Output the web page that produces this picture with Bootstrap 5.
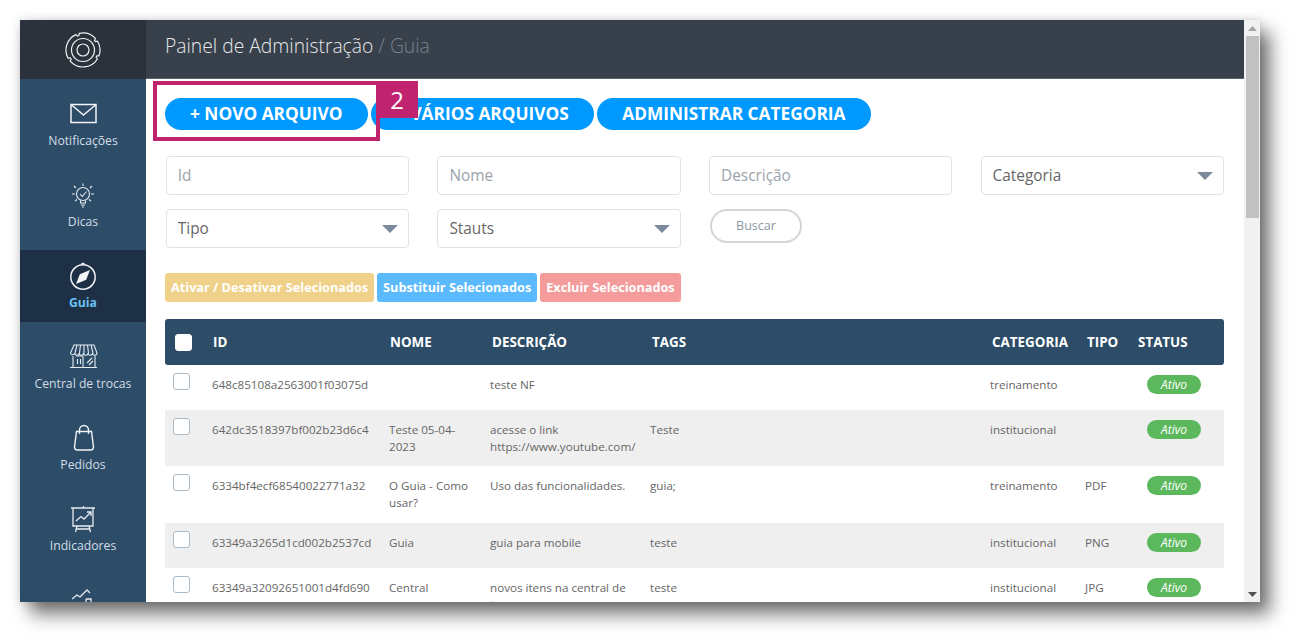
<!DOCTYPE html>
<html lang="pt-BR">
<head>
  <meta charset="UTF-8" />
  <meta name="viewport" content="width=device-width, initial-scale=1" />
  <title>Painel de Administração - Guia</title>
  <link href="https://cdn.jsdelivr.net/npm/bootstrap@5.3.0/dist/css/bootstrap.min.css" rel="stylesheet" />
  <style>
    html, body { height: 643px; overflow: hidden; }
    body { background: #fff; padding: 20px 40px 41px 20px; font-family: "Open Sans", sans-serif; color: #666; }

    .janela { height: 582px; display: flex; background: #fff; overflow: hidden; box-shadow: 10px 12px 17px rgba(0,0,0,.55), 0 0 9px rgba(0,0,0,.15); }

    /* menu lateral */
    .lateral { width: 126px; flex: none; background: #2c4c68; overflow: hidden; }
    .lateral-logo { height: 59px; background: #2b323b; display: flex; align-items: center; justify-content: center; margin-bottom: 9px; }
    .lateral-item { height: 72px; margin-bottom: 9px; padding-top: 11px; text-align: center; color: #d4dde5; font-size: 12.2px; line-height: 18px; }
    .lateral-item svg { display: block; margin: 0 auto 3px; }
    .lateral-item.ativo { background: #1d3045; color: #6cc0f5; font-weight: 700; }

    .conteudo { flex: 1; min-width: 0; position: relative; }
    .topo { height: 59px; background: #37404b; color: #e6e9ec; font-size: 19.3px; font-weight: 300; line-height: 52px; padding-left: 19px; border-bottom: 1px solid #5b6570; }
    .topo span { color: #75838f; }
    .corpo { padding: 19px 20px 0 19px; }

    /* botoes principais */
    .botoes-topo { gap: 3.5px; }
    .btn-azul { height: 32px; padding: 0 25px 1px; border: 0; border-radius: 16px; background: #09f; color: #fff; font-size: 17.3px; font-weight: 700; line-height: 30px; white-space: nowrap; }
    .btn-azul:hover { background: #09f; color: #fff; }

    /* anotacao do passo */
    .passo-caixa { position: absolute; left: 7px; top: 61px; width: 227px; height: 60px; border: 4px solid #c0246f; pointer-events: none; }
    .passo-num { position: absolute; left: 230px; top: 61px; width: 42px; height: 37px; background: #c0246f; color: #fff; font-size: 24px; line-height: 37px; text-align: center; }

    /* filtros */
    .filtros { display: grid; grid-template-columns: repeat(4, 243.3px); column-gap: 28.3px; row-gap: 14px; margin: 26px 0 0 .8px; }
    .filtros .form-control, .filtros .form-select { height: 39px; border: 1px solid #e2e2e2; border-radius: 4px; padding: 0 11px; font-size: 15.4px; color: #666; box-shadow: none; }
    .filtros .form-control::placeholder { color: #9aa3ab; opacity: 1; }
    .filtros .form-select { background-image: url("data:image/svg+xml,%3Csvg xmlns='http://www.w3.org/2000/svg' width='16' height='8'%3E%3Cpath d='M0 0h16L8 8z' fill='%237a8c9b'/%3E%3C/svg%3E"); background-size: 16px 8px; background-position: right 10px center; }
    .btn-buscar { width: 92px; height: 34px; margin-left: 1px; padding: 0; border: 2px solid #d6d6d6; border-radius: 17px; background: #fff; color: #8a97a3; font-size: 12.5px; line-height: 30px; }

    /* acoes em massa */
    .acoes { margin-top: 25px; gap: 3px; }
    .btn-acao { height: 29px; padding: 0 6px; border: 0; border-radius: 3px; color: #fff; font-size: 12.7px; font-weight: 700; line-height: 29px; white-space: nowrap; }
    .btn-acao:hover { color: #fff; }
    .acao-amarelo, .acao-amarelo:hover { background: #f0d18a; }
    .acao-azul, .acao-azul:hover { background: #5bbafe; }
    .acao-vermelho, .acao-vermelho:hover { background: #f49c9c; }

    /* tabela */
    .tabela-guia { --bs-table-bg: transparent; table-layout: fixed; width: 1059px; margin: 17px 0 0; font-size: 11.65px; line-height: 16.7px; color: #666; }
    .col-check { width: 39px; }
    .col-id { width: 177px; }
    .col-nome { width: 101px; }
    .col-desc { width: 160px; }
    .col-tags { width: 340px; }
    .col-cat { width: 95px; }
    .col-tipo { width: 52px; }
    .col-status { width: 95px; }
    .tabela-guia thead th { height: 46px; padding: 0 0 0 9px; background: #2c4c68; color: #fff; font-size: 13.4px; font-weight: 700; vertical-align: middle; }
    .tabela-guia thead th:first-child { border-radius: 3px 0 0 3px; padding-left: 10px; }
    .tabela-guia thead th:nth-child(n+4) { padding-left: 10px; }
    .tabela-guia thead th:last-child { border-radius: 0 3px 3px 0; padding-left: 9px; }
    .tabela-guia tbody td { height: 45px; padding: 12px 8px 11px; vertical-align: top; color: #666; }
    .tabela-guia tbody td:first-child { padding: 8px 0 0 8px; }
    .tabela-guia tbody tr:nth-child(even) td { background: #efefef; }
    .tabela-guia .form-check-input { width: 17px; height: 17px; margin: 0; display: block; border: 1px solid #a9b9c6; border-radius: 3px; }
    .tabela-guia thead .form-check-input { border-color: #fff; }
    .selo-ativo { display: block; width: 54px; height: 19px; margin: -2px 0 0 10px; border-radius: 10px; background: #5cb85c; color: #fff; font-size: 12px; font-style: italic; line-height: 19px; text-align: center; }

    /* barra de rolagem */
    .rolagem { width: 16px; flex: none; background: #f1f1f1; display: flex; flex-direction: column; align-items: center; }
    .rolagem-seta { height: 16px; flex: none; display: flex; align-items: center; justify-content: center; }
    .rolagem-cursor { width: 13px; height: 182px; background: #c1c1c1; }
    .rolagem-resto { flex: 1; }
  </style>
</head>
<body>
  <div class="janela">
    <!-- Menu lateral -->
    <aside class="lateral">
      <div class="lateral-logo">
        <svg width="36" height="36" viewBox="0 0 36 36" fill="none" stroke="#f2f4f5" stroke-width="1.2">
          <path d="M14.18 1.44A17 17 0 0 1 30.43 6.41L29.49 8.36L30.44 9.61L32.57 9.24A17 17 0 0 1 33.97 23.81L31.81 23.86L31.12 25.27L32.42 27.01A17 17 0 0 1 5.17 29.15L6.18 27.23L5.28 25.95L3.13 26.24A17 17 0 0 1 10.82 2.59L12.38 4.09L13.87 3.58z" />
          <circle cx="18" cy="18" r="11.500" />
          <circle cx="18" cy="18" r="6" />
        </svg>
      </div>
      <div class="lateral-item">
        <svg width="30" height="30" viewBox="0 0 30 30" fill="none" stroke="#f2f4f5" stroke-width="1.500">
          <rect x="3" y="5.500" width="25" height="18" />
          <path d="M3 5.500L15.500 16L28 5.500" />
        </svg>
        Notificações
      </div>
      <div class="lateral-item">
        <svg width="30" height="30" viewBox="0 0 30 30" fill="none" stroke="#e6ebef" stroke-width="1.100">
          <circle cx="15" cy="14" r="6.500" />
          <path d="M12 14l2.300 2.500L18.500 11.500M12.500 20.500v2.500h5v-2.500M13 25h4M14 27h2M15 3.500v2.500M6 6l2 2M24 6l-2 2M4 14h3M23 14h3M7 21l2-1.500M23 21l-2-1.500" />
        </svg>
        Dicas
      </div>
      <div class="lateral-item ativo">
        <svg width="30" height="30" viewBox="0 0 30 30" fill="none" stroke="#f2f4f5" stroke-width="1.500">
          <circle cx="15" cy="16" r="12.200" />
          <path d="M13.500 3.500a1.700 1.700 0 0 1 3 0" />
          <path d="M22 9l-3.800 9.800L8 23l3.800-9.800z" fill="#f2f4f5" stroke="none" />
        </svg>
        Guia
      </div>
      <div class="lateral-item">
        <svg width="30" height="30" viewBox="0 0 30 30" fill="none" stroke="#e6ebef" stroke-width="1.100">
          <path d="M6 3h20l3 8a2.200 2.200 0 0 1-4.500 0a2.200 2.200 0 0 1-4.400 0a2.200 2.200 0 0 1-4.500 0a2.200 2.200 0 0 1-4.400 0a2.200 2.200 0 0 1-4.400 0a2.200 2.200 0 0 1-4.300 0z" />
          <path d="M9 3L7 11M12.500 3L11.500 11M16 3v8M19.500 3L20.500 11M23 3L25 11M5 14v11M27 14v11M2 25.500h27M15 14v11M8 14h7M9.500 17v5M12.500 17v5M19 21l5-5M21 23l4-4" />
        </svg>
        Central de trocas
      </div>
      <div class="lateral-item">
        <svg width="30" height="30" viewBox="0 0 30 30" fill="none" stroke="#f2f4f5" stroke-width="1.400">
          <path d="M8.500 8.500h15l2 15.500a3 3 0 0 1-3 3h-13a3 3 0 0 1-3-3z" />
          <path d="M11.500 11V7a4.500 4.500 0 0 1 9 0v4" />
        </svg>
        Pedidos
      </div>
      <div class="lateral-item">
        <svg width="30" height="30" viewBox="0 0 30 30" fill="none" stroke="#e6ebef" stroke-width="1.300">
          <path d="M3 4h24M5 4v18h20V4M15.500 2v2M9 22l-1.500 6M21 22l1.500 6M8 25h14" />
          <path d="M8 17l5-4.500 3 2.500 7-7M19 8h4v4" />
        </svg>
        Indicadores
      </div>
      <div class="lateral-item">
        <svg width="30" height="30" viewBox="0 0 30 30" fill="none" stroke="#e6ebef" stroke-width="1.300">
          <path d="M4 14l5-4 3 2 7-7 3 3M18 14h5v16M18 14v16M6 22h5v8M6 22v8" />
        </svg>
      </div>
    </aside>

    <div class="conteudo">
      <div class="topo">Painel de Administração <span>/ Guia</span></div>

      <div class="corpo">
        <div class="d-flex botoes-topo">
          <button type="button" class="btn btn-azul">+ NOVO ARQUIVO</button>
          <button type="button" class="btn btn-azul">+ VÁRIOS ARQUIVOS</button>
          <button type="button" class="btn btn-azul">ADMINISTRAR CATEGORIA</button>
        </div>

        <div class="filtros">
          <input class="form-control" type="text" placeholder="Id" />
          <input class="form-control" type="text" placeholder="Nome" />
          <input class="form-control" type="text" placeholder="Descrição" />
          <select class="form-select"><option>Categoria</option></select>
          <select class="form-select"><option>Tipo</option></select>
          <select class="form-select"><option>Stauts</option></select>
          <div><button type="button" class="btn btn-buscar">Buscar</button></div>
        </div>

        <div class="acoes d-flex">
          <button type="button" class="btn btn-acao acao-amarelo">Ativar / Desativar Selecionados</button>
          <button type="button" class="btn btn-acao acao-azul">Substituir Selecionados</button>
          <button type="button" class="btn btn-acao acao-vermelho">Excluir Selecionados</button>
        </div>

        <table class="table table-borderless tabela-guia">
          <colgroup>
            <col class="col-check" /><col class="col-id" /><col class="col-nome" /><col class="col-desc" />
            <col class="col-tags" /><col class="col-cat" /><col class="col-tipo" /><col class="col-status" />
          </colgroup>
          <thead>
            <tr>
              <th><input class="form-check-input" type="checkbox" aria-label="Selecionar todos" /></th>
              <th>ID</th><th>NOME</th><th>DESCRIÇÃO</th><th>TAGS</th><th>CATEGORIA</th><th>TIPO</th><th>STATUS</th>
            </tr>
          </thead>
          <tbody>
            <tr>
              <td><input class="form-check-input" type="checkbox" aria-label="Selecionar" /></td>
              <td>648c85108a2563001f03075d</td><td></td><td>teste NF</td><td></td><td>treinamento</td><td></td>
              <td><span class="selo-ativo">Ativo</span></td>
            </tr>
            <tr>
              <td><input class="form-check-input" type="checkbox" aria-label="Selecionar" /></td>
              <td>642dc3518397bf002b23d6c4</td><td>Teste 05-04-2023</td><td>acesse o link https://www.youtube.com/</td><td>Teste</td><td>institucional</td><td></td>
              <td><span class="selo-ativo">Ativo</span></td>
            </tr>
            <tr>
              <td><input class="form-check-input" type="checkbox" aria-label="Selecionar" /></td>
              <td>6334bf4ecf68540022771a32</td><td>O Guia - Como usar?</td><td>Uso das funcionalidades.</td><td>guia;</td><td>treinamento</td><td>PDF</td>
              <td><span class="selo-ativo">Ativo</span></td>
            </tr>
            <tr>
              <td><input class="form-check-input" type="checkbox" aria-label="Selecionar" /></td>
              <td>63349a3265d1cd002b2537cd</td><td>Guia</td><td>guia para mobile</td><td>teste</td><td>institucional</td><td>PNG</td>
              <td><span class="selo-ativo">Ativo</span></td>
            </tr>
            <tr>
              <td><input class="form-check-input" type="checkbox" aria-label="Selecionar" /></td>
              <td>63349a32092651001d4fd690</td><td>Central</td><td>novos itens na central de trocas</td><td>teste</td><td>institucional</td><td>JPG</td>
              <td><span class="selo-ativo">Ativo</span></td>
            </tr>
          </tbody>
        </table>
      </div>

      <!-- Destaque do passo 2 -->
      <div class="passo-caixa"></div>
      <div class="passo-num">2</div>
    </div>

    <!-- Barra de rolagem -->
    <div class="rolagem">
      <div class="rolagem-seta"><svg width="9" height="5"><path d="M0 5L4.500 0L9 5z" fill="#a3a3a3" /></svg></div>
      <div class="rolagem-cursor"></div>
      <div class="rolagem-resto"></div>
      <div class="rolagem-seta"><svg width="9" height="5"><path d="M0 0L4.500 5L9 0z" fill="#505050" /></svg></div>
    </div>
  </div>

  <script src="https://cdn.jsdelivr.net/npm/bootstrap@5.3.0/dist/js/bootstrap.bundle.min.js"></script>
</body>
</html>
